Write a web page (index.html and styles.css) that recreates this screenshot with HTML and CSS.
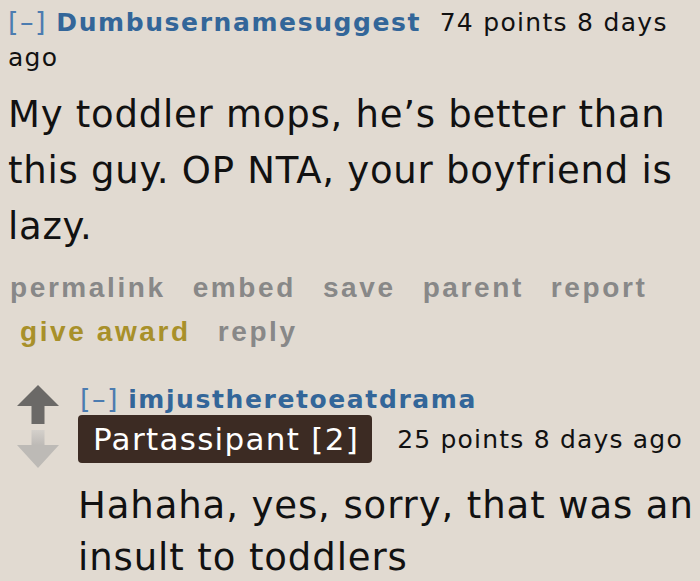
FILE: index.html
```html
<!DOCTYPE html>
<html>
<head>
<meta charset="utf-8">
<link rel="stylesheet" href="styles.css">
</head>
<body>
<div class="comment">
  <div class="tagline">
    <span class="expand">[–]</span> <span class="author">Dumbusernamesuggest</span>&nbsp; <span class="meta">74 points 8 days ago</span>
  </div>
  <div class="md">My toddler mops, he’s better than this guy. OP NTA, your boyfriend is lazy.</div>
  <ul class="buttons">
    <li>permalink</li>
    <li>embed</li>
    <li>save</li>
    <li>parent</li>
    <li>report</li>
    <li class="gild">give award</li>
    <li>reply</li>
  </ul>
  <div class="child">
    <div class="votes">
      <svg class="arrow up" width="42" height="39" viewBox="0 0 42 39"><path d="M21 0 L42 21 L27.5 21 L27.5 39 L14.5 39 L14.5 21 L0 21 Z" fill="#6b6967"/></svg>
      <svg class="arrow down" width="42" height="38" viewBox="0 0 42 38"><defs><linearGradient id="g" x1="0" y1="0" x2="0" y2="1"><stop offset="0" stop-color="#d4d0cb"/><stop offset="0.4" stop-color="#bdbab6"/><stop offset="1" stop-color="#bdbab6"/></linearGradient></defs><path d="M14.5 0 L27.5 0 L27.5 15 L42 15 L21 38 L0 15 L14.5 15 Z" fill="url(#g)"/></svg>
    </div>
    <div class="entry">
      <div class="tagline2"><span class="expand">[–]</span> <span class="author">imjustheretoeatdrama</span></div>
      <div class="flairline"><span class="flair">Partassipant [2]</span><span class="meta">25 points 8 days ago</span></div>
      <div class="md">Hahaha, yes, sorry, that was an insult to toddlers</div>
    </div>
  </div>
</div>
</body>
</html>
```
FILE: styles.css
```css
html, body {
  margin: 0;
  padding: 0;
  background: #e1dad1;
}
body {
  width: 700px;
  height: 581px;
  overflow: hidden;
  font-family: "DejaVu Sans", sans-serif;
  color: #111;
}
.comment {
  padding: 4px 0 0 8px;
}
.tagline {
  font-size: 25px;
  line-height: 35px;
  letter-spacing: 1.3px;
}
.expand {
  color: #4c7cb0;
  font-weight: normal;
  font-size: 27px;
  letter-spacing: 1.5px;
}
.author {
  color: #336699;
  font-weight: bold;
  font-size: 25px;
  letter-spacing: 1.6px;
}
.meta {
  color: #111;
}
.md {
  font-size: 37px;
  line-height: 56px;
  letter-spacing: 0.75px;
  margin-top: 12px;
}
.buttons {
  list-style: none;
  margin: 11px 0 0 0;
  padding: 0;
  display: flex;
  flex-wrap: wrap;
  column-gap: 25px;
  font-family: "Liberation Sans", Arial, sans-serif;
  font-weight: bold;
  font-size: 28px;
  line-height: 44px;
  color: #888888;
  width: 660px;
}
.buttons li {
  padding-left: 2px;
  letter-spacing: 2.6px;
}
.buttons .gild {
  color: #a8902a;
  margin-left: 10px;
}
.child {
  display: flex;
  margin-top: 30px;
  gap: 19px;
}
.votes {
  display: flex;
  flex-direction: column;
  gap: 6px;
  padding-left: 9px;
  padding-top: 1px;
}
.arrow {
  display: block;
}
.entry {
  flex: 1;
  min-width: 0;
}
.tagline2 {
  font-size: 25px;
  line-height: 30px;
  letter-spacing: 1.1px;
  padding-left: 2px;
}
.flairline {
  display: flex;
  align-items: center;
  gap: 25px;
  font-size: 25px;
  letter-spacing: 1.2px;
}
.flair {
  background: #3c2b23;
  color: #fff;
  font-size: 31px;
  line-height: 48px;
  letter-spacing: 1.3px;
  padding: 0 13px 0 15px;
  border-radius: 4px;
}
.entry .md {
  margin-top: 17px;
  font-size: 37px;
  line-height: 52px;
  letter-spacing: 0.9px;
}
```
